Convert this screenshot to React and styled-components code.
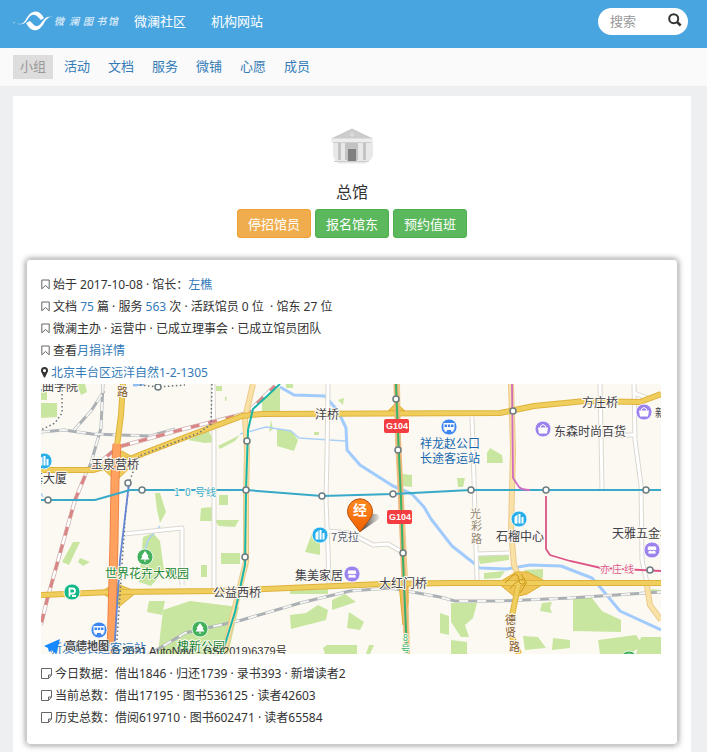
import React from "react";
import styled, { createGlobalStyle } from "styled-components";

const GlobalStyle = createGlobalStyle`
  * { box-sizing: border-box; }
  body {
    margin: 0;
    background: #eeeff0;
    color: #333;
    font-family: "Noto Sans", "Noto Sans CJK SC", sans-serif;
    font-size: 12px;
    line-height: 22px;
  }
  a { color: #337ab7; text-decoration: none; }
`;

const Header = styled.header`
  display: flex;
  align-items: center;
  height: 48px;
  padding: 0 19px 6px 12px;
  background: #48a5df;
`;

const HomeLink = styled.a`
  display: flex;
  margin-right: 15px;
`;

const SiteNav = styled.nav`
  display: flex;
  gap: 25px;
  font-size: 13px;
  a { color: #fff; }
`;

const SearchForm = styled.form`
  display: flex;
  align-items: center;
  width: 90px;
  height: 27px;
  margin-left: auto;
  padding: 0 6px 0 12px;
  border-radius: 14px;
  background: #fff;
`;

const SearchInput = styled.input`
  flex: 1;
  min-width: 0;
  padding: 0;
  border: 0;
  outline: 0;
  background: transparent;
  font: inherit;
  font-size: 13px;
  line-height: 20px;
  &::placeholder { color: #999; opacity: 1; }
`;

const SearchButton = styled.button`
  display: flex;
  padding: 0 0 3px;
  border: 0;
  background: none;
  color: #333;
`;

const TabBar = styled.nav`
  display: flex;
  gap: 4px;
  height: 38px;
  padding: 7px 13px;
  background: #fafafa;
`;

const Tab = styled.a`
  padding: 0 7px;
  font-size: 13px;
  line-height: 23px;
  background: ${(p) => (p.$active ? "#ddd" : "transparent")};
  && { color: ${(p) => (p.$active ? "#999" : "#337ab7")}; }
`;

const Page = styled.main`
  margin: 10px 16px 0 13px;
  padding: 25px 13px 20px;
  background: #fff;
`;

const Intro = styled.section`
  display: flex;
  flex-direction: column;
  align-items: center;
`;

const Title = styled.h1`
  margin: 9px 0 5px;
  font-size: 16px;
  font-weight: 400;
  line-height: 24px;
`;

const Actions = styled.div`
  display: flex;
  gap: 4px;
`;

const ActionButton = styled.button`
  height: 29px;
  padding: 0 10px;
  border: 1px solid ${(p) => (p.$warning ? "#eea236" : "#4cae4c")};
  border-radius: 3px;
  background: ${(p) => (p.$warning ? "#f0ad4e" : "#5cb85c")};
  color: #fff;
  font: inherit;
  font-size: 13px;
  line-height: 20px;
`;

const Card = styled.section`
  margin-top: 21px;
  padding: 14px 14px 15px;
  border: 1px solid #ccc;
  border-radius: 4px;
  box-shadow: 0 0 6px #888;
`;

const Line = styled.p`
  margin: 0;
  svg {
    display: inline-block;
    margin-right: 3px;
    vertical-align: -1px;
  }
`;

const MapSvg = styled.svg`
  display: block;
  width: 100%;
  max-width: 620px;
  height: auto;
  margin-bottom: 9px;
  font-family: "Noto Sans CJK SC", sans-serif;
`;

const Logo = () => (
  <svg width="107" height="24" viewBox="12 9 107 24" role="img" aria-label="微澜图书馆">
    <path d="M17 23.500c6 1.500 7-1 10-6 4-6.500 10-8.500 15-2.500l2 3-3 2-3-3c-4-4-8-2-10 2-3 5-6 6.500-11 4.500z" fill="#fff" />
    <path d="M53 17c-4-.5-6 1-9 6-4 8-11 10-16 3l-2-3 4-2 3 3c4 4 6 2 9-2 3-5 6-6 11-5z" fill="#fff" />
    <path d="M13 22.500l2 .5" stroke="#fff" opacity=".5" />
    <g fill="#fff" opacity=".8" fontFamily="Noto Sans CJK SC" fontSize="10" fontWeight="500" fontStyle="italic">
      <text x="54 69 83 96 108" y="25">微澜图书馆</text>
    </g>
  </svg>
);

const SearchIcon = () => (
  <svg width="14" height="14" viewBox="0 0 14 14" fill="none" stroke="currentColor">
    <circle cx="5.700" cy="5.700" r="4.500" strokeWidth="2" />
    <path d="M9 9l3.700 3.500" strokeWidth="2.500" />
  </svg>
);

const BookmarkIcon = () => (
  <svg width="9" height="11" viewBox="0 0 9 11" fill="none" stroke="#666">
    <path d="M.8 1h7.400v8.800L4.500 6.500.8 9.800z" />
  </svg>
);

const NoteIcon = () => (
  <svg width="11" height="11" viewBox="0 0 11 11" fill="none" stroke="#666">
    <path d="M.5.5h10v6.500L7.500 10.500H.5zM7.500 10.500V7h3" />
  </svg>
);

const PlaceIcon = () => (
  <svg width="7" height="11" viewBox="0 0 7 11">
    <path d="M3.500 0A3.500 3.500 0 0 0 0 3.500c0 1 .3 1.500.6 2.100L3 10.500h1l2.400-4.900c.3-.6.6-1.100.6-2.100A3.500 3.500 0 0 0 3.500 0zm0 2a1.600 1.600 0 1 1 0 3.200 1.600 1.600 0 0 1 0-3.200z" fill="#333" fillRule="evenodd" />
  </svg>
);

const LibraryIcon = () => (
  <svg width="48" height="50" viewBox="328 121 48 50" aria-hidden="true">
    <path d="M333 141h40v15c-2 4-5 6-8 7.500h-26c-3-1.500-5-4-6-7.500z" fill="#e8e8e8" />
    <path d="M352 129l20 9.500h-40z" fill="#ccc" />
    <path d="M352 129l20 9.500h-40z" fill="none" stroke="#bbb" strokeWidth=".6" />
    <path d="M331 138.500h42v2l-1 2h-40l-1-2z" fill="#ededed" />
    <path d="M333 142.500h38" stroke="#ccc" />
    <path d="M338 143h3v17h-3zM345 143h2.500v17H345zM356 143h2v17h-2zM363 143h3v17h-3z" fill="#c4c4c4" />
    <path d="M347 143h10v18h-10z" fill="#c2c2c2" />
    <path d="M348 149h8v12h-8z" fill="#808080" />
    <path d="M334 161.500h35" stroke="#ccc" />
    <circle cx="352" cy="134.500" r="1.500" fill="none" stroke="#eee" strokeWidth=".8" />
  </svg>
);

const POI_COLORS = { bag: "#9c82ec", shop: "#9c82ec", tower: "#28aee8", bus: "#3e86ef", tree: "#43b05c", park: "#12b886" };
const POI_GLYPHS = {
  bag: (
    <>
      <path d="M-5-1.500h10l-1 6h-8z" fill="#fff" />
      <path d="M-2.500-1.500v-1.500q2.500-3 5 0v1.500" fill="none" stroke="#fff" />
    </>
  ),
  shop: <path d="M-4-4h8l1 4H4v4h-8V0h-1zM-5 0q1.700 2 3.300 0 1.700 2 3.400 0Q3.300 2 5 0" fill="#fff" stroke="#9c82ec" strokeWidth=".8" />,
  tower: <path d="M-4.500 4.500V-2l3-2.500v9zM-.5 4.500v-9.500h2v9.500zM2.500 4.500V-2h2v6.500z" fill="#fff" />,
  bus: <path d="M-5.500-4h11v6.500H4.500V4.500H2V3h-4v1.500h-2.500V2.500h-1zM-4.500-2.500v2.500h2.500v-2.500zm3.300 0v2.500h2.400v-2.500zm3.200 0v2.500h2.500v-2.500z" fill="#fff" fillRule="evenodd" />,
  tree: <path d="M0-6l3.500 5-1 .5L4.500 2.500h-4V5h-1V2.500h-4l2-3-1-.5z" fill="#fff" />,
  park: <path d="M-2.500 4.500v-8h3a2.500 2.500 0 0 1 0 5h-3M0 4h4" fill="none" stroke="#fff" strokeWidth="1.800" />,
};

const Poi = ({ kind, x, y }) => (
  <g transform={`translate(${x} ${y})`}>
    <circle r="8" fill={POI_COLORS[kind]} stroke="#fff" strokeWidth=".8" />
    {POI_GLYPHS[kind]}
  </g>
);

const GREENS = [
  "41,392 47,392 47,400 41,400", "41,403 57,403 57,417 41,418", "77,384 85,384 87,392 81,395", "216,386 222,386 222,391 216,391",
  "225,397 227,397 226,401 225,401", "262,397 280,387 280,411 262,411", "277,429 291,430 298,440 294,451 277,446",
  "286,384 293,384 293,388 286,388", "338,400 344,398 343,405", "188,440 208,430 215,442 205,443", "218,446 240,435 235,441 220,449",
  "155,493 160,493 166,512 160,523 157,510", "201,508 213,507 214,521 200,521", "219,495 228,495 228,505 219,505",
  "73,542 80,542 69,565 62,562", "80,558 90,562 83,566 78,562", "143,537 153,533 160,541 164,571 151,586 139,582",
  "201,565 207,565 207,577 201,577", "221,553 240,553 240,564 221,564", "214,520 239,520 235,527 219,526",
  "149,601 165,601 162,615 147,612", "163,610 190,601 239,607 228,654 158,654", "403,474 412,475 412,487 403,486",
  "312,533 320,540 320,555 305,552", "290,590 328,589 328,594 290,594",
  "290,615 306,613 318,605 328,610 326,620 291,629", "332,600 345,594 356,602 332,610", "349,612 364,622 360,630 347,628",
  "323,648 327,645 357,645 357,654 325,654", "369,645 374,645 370,654 366,654", "440,613 449,616 449,635 440,633",
  "487,453 490,448 502,455 503,463 487,463", "457,478 465,478 463,487 458,487", "478,556 509,554 509,560 480,564",
  "484,573 505,571 500,578 484,579", "524,570 543,569 543,578 531,579", "542,603 552,602 550,608 552,613 540,611",
  "573,598 592,598 602,611 621,620 621,632 573,631", "641,637 661,637 661,654 636,654",
  "598,640 636,635 643,645 630,654 600,654", "523,636 538,637 546,648 525,650", "553,638 570,640 570,648 552,650",
  "451,603 477,603 473,618 465,625 469,637 461,637 451,622",
  "451,640 467,642 467,654 451,654", "651,589 661,590 661,593 651,592", "269,432 271,420 273,429", "314,432 319,432 319,435 314,435",
];

const WHITE_ROADS = [
  "328,384 327,455 326,500 328,550 329,584", "213,384 214,440 214,594", "472,417 474,480 477,580", "600,384 602,489",
  "634,384 635,440 641,485 642,560 647,583", "328,531 350,533 373,545 388,544 402,552", "634,393 650,399", "602,435 635,435",
  "124,534 182,528 182,585", "477,554 509,553",
];
const LIGHT_ROADS = [
  "253,384 245,418 247,450 246,500 246,562 240,586 224,654", "511,384 513,450 511,530 514,565 520,580",
  "397,384 398,440 402,520 405,580 407,654", "647,586 650,605 661,620",
];
const MAIN_ROADS = [
  "41,470 93,470 125,461 142,454 191,435 242,416 262,414 500,413 534,406 585,401 640,402 661,394",
  "41,595 112,592 220,591 265,589 382,584 450,583 661,583", "123,384 121,415 117,446",
  "520,577 514,606 509,630 519,654",
];
const RAILS = [
  "103,384 101,428 91,463 85,476", "41,432 64,430 92,434 150,436 175,429", "74,430 91,411 104,391",
  "148,655 185,633 242,620 300,603 350,591 390,588 440,597 455,601 500,601 570,598 661,592",
];
const RED_RAILS = ["85,476 75,500 59,557 47,600 41,625", "93,468 118,447 180,430 247,413 275,386"];
const STREAMS = ["41,493 43,497", "240,434 266,427 291,431 299,438 345,441", "144,554 148,540 160,526"];
const STATIONS = [
  [158, 387], [128, 483], [142, 490], [48, 500], [247, 441], [246, 490], [322, 496], [393, 494], [396, 399], [398, 450],
  [403, 553], [513, 411], [471, 490], [546, 490], [646, 490], [245, 557], [650, 570],
];
const LABELS = [
  { x: 315, y: 419, t: "洋桥" }, { x: 582, y: 407, t: "方庄桥" }, { x: 91, y: 469, t: "玉泉营桥" }, { x: 213, y: 597, t: "公益西桥" },
  { x: 379, y: 588, t: "大红门桥" }, { x: 30, y: 391, t: "戏曲学院" }, { x: 31, y: 483, t: "基大厦" },
  { x: 554, y: 436, t: "东森时尚百货" }, { x: 655, y: 417, t: "新", s: 11 }, { x: 331, y: 541, t: "7克拉", s: 11, c: "#586177" },
  { x: 295, y: 580, t: "集美家居" }, { x: 496, y: 541, t: "石榴中心" }, { x: 612, y: 538, t: "天雅五金机电" },
  { x: 420, y: 448, t: "祥龙赵公口", c: "#1668b0" }, { x: 420, y: 463, t: "长途客运站", c: "#1668b0" },
  { x: 105, y: 578, t: "世界花卉大观园", c: "#248a36" }, { x: 177, y: 651, t: "槐新公园", c: "#248a36" },
  { x: 50, y: 653, t: "新发地长途客运站", c: "#2b74ba" },
  { x: 117, y: 396, t: "路", c: "#805624", s: 11 }, { x: 470, y: 518, t: "光", c: "#91836f", s: 11 }, { x: 471, y: 530, t: "彩", c: "#91836f", s: 11 },
  { x: 471, y: 543, t: "路", c: "#91836f", s: 11 }, { x: 505, y: 624, t: "德", c: "#805624", s: 11 }, { x: 505, y: 637, t: "贤", c: "#805624", s: 11 },
  { x: 509, y: 651, t: "路", c: "#805624", s: 11 }, { x: "174 185 195 206", y: 496, t: "10号线", c: "#38accb", s: 10 },
  { x: "600 612 624", y: 573, t: "亦庄线", c: "#dd598c", s: 10 }, { x: 403, y: 641, t: "8", c: "#37b56a", s: 9 }, { x: 401, y: 652, t: "号", c: "#37b56a", s: 9 },
];
const POIS = [
  ["tower", 44, 461], ["tower", 320, 535], ["tower", 519, 519], ["bus", 449, 427], ["bus", 99, 630], ["bag", 543, 429], ["bag", 644, 412],
  ["shop", 352, 574], ["shop", 652, 550], ["tree", 145, 557], ["tree", 200, 629], ["tree", 629, 659], ["park", 72, 592],
];

const Lines = ({ list, ...rest }) => (
  <g fill="none" strokeLinejoin="round" {...rest}>
    {list.map((points) => <polyline key={points} points={points} />)}
  </g>
);

const LocationMap = () => (
  <MapSvg viewBox="41 384 620 270" role="img" aria-label="总馆位置地图">
    <defs>
      <linearGradient id="pinFill" x2="0" y2="1">
        <stop stopColor="#ff8a20" />
        <stop offset="1" stopColor="#ed6000" />
      </linearGradient>
      <linearGradient id="pinShade">
        <stop stopColor="#333" />
        <stop offset="1" stopColor="#333" stopOpacity=".1" />
      </linearGradient>
    </defs>
    <path d="M41 384h620v270H41z" fill="#fcf9f2" />
    <g fill="#c9e6a0">{GREENS.map((points) => <polygon key={points} points={points} />)}</g>
    <Lines list={STREAMS} stroke="#abd0f7" strokeWidth="1.500" />
    <polyline points="133,385 144,384" stroke="#8fbdf4" strokeWidth="3" />
    <polyline points="280,387 294,395 325,396 338,411 346,428 347,450 360,465 393,486 412,494 424,507 431,519 452,546 480,568 507,569 530,565 561,566 592,578 600,587 620,611 661,630" fill="none" stroke="#a1cbfc" strokeWidth="3" strokeLinejoin="round" />
    <Lines list={WHITE_ROADS} stroke="#dcd8d0" strokeWidth="5" />
    <Lines list={WHITE_ROADS} stroke="#fff" strokeWidth="3" />
    <Lines list={RAILS} stroke="#aab0b3" strokeWidth="3" />
    <Lines list={RAILS} stroke="#f5f5f3" strokeWidth="2" strokeDasharray="9 9" />
    <Lines list={RED_RAILS} stroke="#ceb0b0" strokeWidth="4" />
    <Lines list={RED_RAILS} stroke="#fff" strokeWidth="2.500" />
    <Lines list={RED_RAILS} stroke="#d98585" strokeWidth="3" strokeDasharray="9 9" />
    <Lines list={LIGHT_ROADS} stroke="#ecc98a" strokeWidth="6" />
    <Lines list={LIGHT_ROADS} stroke="#f9e2a7" strokeWidth="4" />
    <path d="M103 469l19-18 16 9-22 21zM101 592l14-9 22 9-17 14z" fill="#edca59" stroke="#dfb341" />
    <path d="M498 583l18-11h11l20 10-20 12-12 3zM388 411l8-8 9 8zM399 583l9 0 0 20-5 22z" fill="#efc555" stroke="#dfac2b" />
    <Lines list={MAIN_ROADS} stroke="#dfb23c" strokeWidth="6" />
    <Lines list={MAIN_ROADS} stroke="#f0ce5d" strokeWidth="4" />
    <path d="M505 583c6-5 8-10 12-8s-1 10 7 9c4-6-4-7-2-10M510 589c4-6 10-10 14-10M520 593l7-11" fill="none" stroke="#c99510" />
    <polyline points="117,444 115,480 114,540 111,654" fill="none" stroke="#ec8447" strokeWidth="9" />
    <polyline points="117,444 115,480 114,540 111,654" fill="none" stroke="#ffa260" strokeWidth="7" />
    <g fill="none" stroke="#69717b" strokeWidth="1.500" strokeDasharray="1.500 2.500">
      <polyline points="62,390 62,413 55,423 41,430" />
      <polyline points="140,385 158,387 185,385" />
      <polyline points="212,384 211,424 199,433 139,456 129,483 125,520 116,654" />
    </g>
    <polyline points="129,483 120,560 114,654" fill="none" stroke="#6385d3" strokeWidth="1.800" />
    <polyline points="396,384 397,410 401,500 403,560 407,654" fill="none" stroke="#eeb47c" strokeWidth="5" />
    <polyline points="396,384 397,410 401,500 403,560 407,654" fill="none" stroke="#35b368" strokeWidth="2" />
    <polyline points="280,384 253,409 248,430 246,490 245,565 235,612 222,654" fill="none" stroke="#18b6aa" strokeWidth="2" />
    <polyline points="41,500 95,500 130,490 246,490 322,496 393,494 471,490 661,490" fill="none" stroke="#38a9c8" strokeWidth="2" />
    <path d="M512 384L513 478L519 487Q522 490 530 490" fill="none" stroke="#d16dc0" strokeWidth="1.800" />
    <path d="M546 496V549L550 555L570 561L601 568L661 571" fill="none" stroke="#dc5487" strokeWidth="1.800" />
    <g fill="#fff" stroke="#6d7c80" strokeWidth="1.500">
      {STATIONS.map(([x, y]) => <circle key={`${x}-${y}`} cx={x} cy={y} r="3" />)}
    </g>
    <g stroke="#fcf9f2" strokeWidth="2" strokeLinejoin="round" paintOrder="stroke">
      {LABELS.map(({ x, y, t, c = "#404048", s = 12 }) => (
        <text key={`${t}-${y}`} x={x} y={y} fill={c} fontSize={s}>{t}</text>
      ))}
    </g>
    {POIS.map(([kind, x, y]) => <Poi key={`${x}-${y}`} kind={kind} x={x} y={y} />)}
    {[[397, 426], [400, 517]].map(([x, y]) => (
      <g key={y}>
        <rect x={x - 13} y={y - 7} width="25" height="14" rx="2" fill="#f43d40" />
        <text x={x} y={y + 3} fill="#fff" fontFamily="Liberation Sans" fontSize="9" fontWeight="700" textAnchor="middle">G104</text>
      </g>
    ))}
    <path d="M371 514q10-1 8 5l-19 13z" fill="url(#pinShade)" />
    <path d="M360 532l-9-12a12.500 12.500 0 1 1 18 0z" fill="url(#pinFill)" stroke="#b94d0b" />
    <text x="360" y="515" fill="#fff" fontSize="14" fontWeight="700" textAnchor="middle">经</text>
    <path d="M44 646l16-7-4 15-4-4-3 2-1-4z" fill="#1688ff" />
    <text x="65" y="650" fill="#4c4c50" stroke="#fff" strokeWidth="1" paintOrder="stroke" fontSize="11" fontWeight="700">高德地图</text>
    <text x="111" y="655" fill="#333" fontFamily="Liberation Sans, Noto Sans CJK SC" fontSize="11">© 2021 AutoNavi - GS(2019)6379号</text>
  </MapSvg>
);

const TABS = ["小组", "活动", "文档", "服务", "微铺", "心愿", "成员"];
const STATS = [
  "今日数据：借出1846 · 归还1739 · 录书393 · 新增读者2",
  "当前总数：借出17195 · 图书536125 · 读者42603",
  "历史总数：借阅619710 · 图书602471 · 读者65584",
];

export default function App() {
  return (
    <>
      <GlobalStyle />
      <Header>
        <HomeLink href="#"><Logo /></HomeLink>
        <SiteNav>
          <a href="#">微澜社区</a>
          <a href="#">机构网站</a>
        </SiteNav>
        <SearchForm role="search">
          <SearchInput type="text" placeholder="搜索" aria-label="搜索" />
          <SearchButton type="button" aria-label="搜索"><SearchIcon /></SearchButton>
        </SearchForm>
      </Header>
      <TabBar>
        {TABS.map((tab, i) => <Tab key={tab} href="#" $active={i === 0}>{tab}</Tab>)}
      </TabBar>
      <Page>
        <Intro>
          <LibraryIcon />
          <Title>总馆</Title>
          <Actions>
            <ActionButton type="button" $warning>停招馆员</ActionButton>
            <ActionButton type="button">报名馆东</ActionButton>
            <ActionButton type="button">预约值班</ActionButton>
          </Actions>
        </Intro>
        <Card>
          <Line><BookmarkIcon />始于 2017-10-08 · 馆长：<a href="#">左樵</a></Line>
          <Line><BookmarkIcon />文档 <a href="#">75</a> 篇 · 服务 <a href="#">563</a> 次 · 活跃馆员 0 位 &nbsp;· 馆东 27 位</Line>
          <Line><BookmarkIcon />微澜主办 · 运营中 · 已成立理事会 · 已成立馆员团队</Line>
          <Line><BookmarkIcon />查看<a href="#">月捐详情</a></Line>
          <Line><PlaceIcon /><a href="#">北京丰台区远洋自然1-2-1305</a></Line>
          <LocationMap />
          {STATS.map((text) => <Line key={text}><NoteIcon />{text}</Line>)}
        </Card>
      </Page>
    </>
  );
}
